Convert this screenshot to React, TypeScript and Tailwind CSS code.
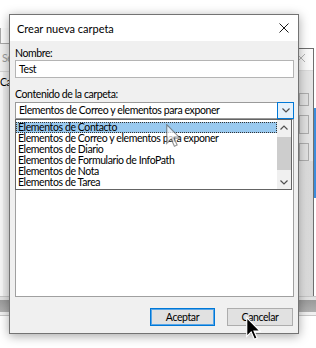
import React from "react";

const items = [
  "Elementos de Contacto",
  "Elementos de Correo y elementos para exponer",
  "Elementos de Diario",
  "Elementos de Formulario de InfoPath",
  "Elementos de Nota",
  "Elementos de Tarea",
];

function Cursor({ className, faded }: { className?: string; faded?: boolean }) {
  return (
    <svg className={className} viewBox="0 0 12.5 19.5" width="15" height="23">
      <path
        d="M0.5 0.5 L0.5 16.5 L4.3 12.8 L7 18.8 L9.3 17.8 L6.7 11.9 L11.8 11.9 Z"
        fill={faded ? "#ffffff" : "#000000"}
        stroke={faded ? "#6a6a6a" : "#ffffff"}
        strokeWidth="1"
        strokeLinejoin="miter"
      />
    </svg>
  );
}

function Chevron({ up, className }: { up?: boolean; className?: string }) {
  return (
    <svg className={className} width="8" height="5" viewBox="0 0 8 5">
      <path
        d={up ? "M0.5 4.5 L4 1 L7.5 4.5" : "M0.5 0.5 L4 4 L7.5 0.5"}
        fill="none"
        stroke="#505050"
        strokeWidth="1.2"
      />
    </svg>
  );
}

export default function App() {
  return (
    <div className="relative w-[316px] h-[348px] bg-white overflow-hidden font-['Lato',sans-serif] text-[10.5px] tracking-[-0.4px] text-black">
      {/* background window, left edge */}
      <div className="absolute left-0 top-[28px] w-[14px] h-[16px] border-l border-b border-[#a8a8a8] bg-[#fbfbfb]" />
      <div className="absolute left-0 top-[44px] w-[14px] h-[28px] bg-[#f0f0f0] border-b border-[#d4d4d4] text-[#9a9a9a] pl-[2px] pt-[7px] leading-[14px]">
        Se
      </div>
      <div className="absolute left-0 top-[72px] w-[14px] h-[224px] bg-[#ececec] border-l-[3px] border-[#f6f6f6]">
        <div className="pt-[3px] -ml-[3px] leading-[14px] text-black">Ca</div>
      </div>
      {/* background window, right edge */}
      <div className="absolute left-[296px] top-[48px] w-[18px] h-[252px] border-t border-r border-[#6e6e6e] bg-[#e4e4e4] flex flex-col">
        <div className="h-[22px] bg-[#fafafa] border-b border-[#dadada] relative">
          <svg className="absolute left-[0px] top-[4px]" width="10" height="10" viewBox="0 0 10 10">
            <path d="M1 1 L9 9 M9 1 L1 9" stroke="#b4b4b4" strokeWidth="1" />
          </svg>
        </div>
        <div className="flex flex-col gap-[9px] pt-[22px] pl-[3px]">
          <div className="w-[10px] h-[13px] border border-[#adadad] bg-[#e1e1e1]" />
          <div className="w-[10px] h-[19px] border border-[#adadad] bg-[#e1e1e1]" />
          <div className="w-[10px] h-[18px] border border-[#adadad] bg-[#e1e1e1]" />
        </div>
        <div className="flex-1 bg-gradient-to-r from-[#e8e8e8] to-[#d6d6d6]" />
      </div>
      <div className="absolute left-[314px] top-[108px] w-[2px] h-[90px] bg-[#3b8ddb]" />
      {/* bottom bar of background window */}
      <div className="absolute left-0 top-[296px] w-[316px] h-[4px] bg-[#e2e2e2] border-t border-[#c6c6c6]" />
      <div className="absolute left-0 top-[300px] w-[316px] h-[12px] bg-gradient-to-b from-[#9a9a9a] to-[#b0b0b0]" />
      <div className="absolute left-0 top-[312px] w-[316px] h-[4px] bg-[#f0f0f0] border-b border-[#c8c8c8]" />

      {/* dialog */}
      <div className="absolute left-[9px] top-[14px] w-[290px] h-[320px] border border-[#737373] bg-[#f0f0f0] shadow-[0_2px_10px_rgba(0,0,0,0.35)] flex flex-col">
        <div className="h-[26px] bg-white flex items-center justify-between pl-[7px] pr-[9px]">
          <span className="text-[11px] tracking-normal leading-[14px] pt-[1px]">Crear nueva carpeta</span>
          <svg width="10" height="10" viewBox="0 0 10 10">
            <path d="M0.5 0.5 L9.5 9.5 M9.5 0.5 L0.5 9.5" stroke="#1a1a1a" strokeWidth="1" />
          </svg>
        </div>
        <div className="flex-1 flex flex-col pl-[5px] pr-[4px] pt-[5px] pb-[7px]">
          <div className="leading-[14px] h-[14px]">Nombre:</div>
          <div className="h-[18px] border border-[#b4b4b4] bg-white pl-[3px] leading-[16px]">Test</div>
          <div className="leading-[14px] h-[14px] mt-[9px] mb-[1px]">Contenido de la carpeta:</div>
          <div className="relative">
            <div className="h-[17px] border border-[#9a9a9a] bg-white flex items-center">
              <span className="flex-1 pl-[3px] leading-[15px]">Elementos de Correo y elementos para exponer</span>
              <div className="w-[17px] h-[17px] -mr-[1px] border border-[#0078d7] bg-[#e5f1fb] flex items-center justify-center">
                <Chevron />
              </div>
            </div>
            <div className="h-[178px] border border-[#a0a0a0] bg-white" />
            {/* dropdown list overlay */}
            <div className="absolute left-0 top-[17px] w-[277px] h-[71px] border border-[#646464] bg-white flex pt-[2px]">
              <div className="flex-1 flex flex-col">
                {items.map((t, i) => (
                  <div
                    key={t}
                    className={
                      i === 0
                        ? "h-[11px] leading-[9px] pl-[1px] bg-[#99c9ef] border border-dotted border-[#333]"
                        : "h-[11px] leading-[11px] pl-[2px]"
                    }
                  >
                    {t}
                  </div>
                ))}
              </div>
              <div className="w-[14px] -mt-[2px] bg-[#f0f0f0] flex flex-col items-center">
                <div className="h-[15px] flex items-center justify-center">
                  <Chevron up />
                </div>
                <div className="w-[14px] h-[33px] bg-[#cdcdcd] mt-[2px]" />
                <div className="flex-1" />
                <div className="h-[14px] flex items-center justify-center">
                  <Chevron />
                </div>
              </div>
            </div>
            <Cursor faded className="absolute left-[151px] top-[22px] opacity-70" />
          </div>
          <div className="flex justify-end gap-[12px] mt-[11px] pr-[1px]">
            <div className="w-[65px] h-[18px] border border-[#0078d7] shadow-[inset_0_0_0_1px_#5aa6e6] bg-[#e1e1e1] flex items-center justify-center leading-[14px]">
              Aceptar
            </div>
            <div className="w-[66px] h-[18px] border border-[#adadad] bg-[#e1e1e1] flex items-center justify-center leading-[14px]">
              Cancelar
            </div>
          </div>
        </div>
      </div>
      <Cursor className="absolute left-[246px] top-[317px]" />
    </div>
  );
}
